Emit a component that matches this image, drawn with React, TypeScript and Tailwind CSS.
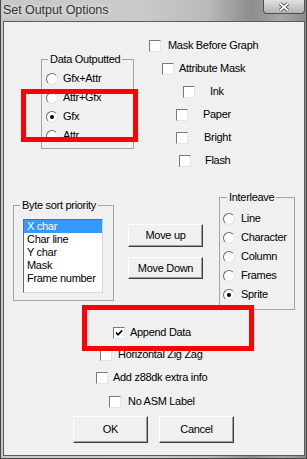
import React from "react";

const Radio = ({ checked }: { checked?: boolean }) => (
  <span className="flex h-[12px] w-[12px] shrink-0 items-center justify-center rounded-full border border-t-[#6e6e6e] border-l-[#6e6e6e] border-r-[#e2e2e2] border-b-[#e2e2e2] bg-white">
    {checked && <span className="h-[4px] w-[4px] rounded-full bg-black" />}
  </span>
);

const Check = ({ checked }: { checked?: boolean }) => (
  <span className="flex h-[12px] w-[12px] shrink-0 items-center justify-center border border-t-[#7a7a7a] border-l-[#7a7a7a] border-r-[#e4e4e4] border-b-[#e4e4e4] bg-white">
    {checked && (
      <svg width="10" height="10" viewBox="0 0 10 10">
        <path d="M2 4.5 L4 6.8 L8.2 2.4" fill="none" stroke="#000" strokeWidth="1.7" />
      </svg>
    )}
  </span>
);

const Btn = ({ label, h }: { label: string; h: string }) => (
  <button
    className={`flex w-[75px] items-center justify-center border border-t-white border-l-white border-r-[#3c3c3c] border-b-[#3c3c3c] bg-[#f0f0f0] shadow-[inset_-1px_-1px_0_#a0a0a0] ${h}`}
  >
    {label}
  </button>
);

const RadioRow = ({ label, checked, gap }: { label: string; checked?: boolean; gap: string }) => (
  <div className={`flex h-[19px] items-center ${gap}`}>
    <Radio checked={checked} />
    <span>{label}</span>
  </div>
);

const CheckRow = ({ label, checked, pad, gap, h = "h-[23px]" }: { label: string; checked?: boolean; pad: string; gap: string; h?: string }) => (
  <div className={`flex items-center ${h} ${pad} ${gap}`}>
    <Check checked={checked} />
    <span>{label}</span>
  </div>
);

export default function App() {
  return (
    <div className="relative h-[459px] w-[307px] overflow-hidden border-x border-b border-[#474747] bg-[linear-gradient(90deg,#c6c6c6_0%,#cbcbcb_45%,#b9b9b9_68%,#8d8d8d_82%,#a7a7a7_92%,#8a8a8a_100%)] font-['Liberation_Sans',Arial,sans-serif] text-[11px] leading-[13px] tracking-[-0.3px] text-black">
      {/* title bar */}
      <div className="flex h-[21px] items-start justify-between pl-[2px] pr-[1px]">
        <span className="mt-[3px] text-[12.5px] leading-[14px] tracking-[-0.05px] text-[#353535] [text-shadow:0_0_6px_#ffffff]">
          Set Output Options
        </span>
        <div className="flex h-[14px] w-[42px] items-center justify-center rounded-b-[4px] border border-t-0 border-[#4f4f4f] bg-[linear-gradient(#e2e2e2,#b3b3b3)]">
          <svg width="12" height="10" viewBox="0 0 12 10">
            <path d="M2 1.5 L10 8.5 M10 1.5 L2 8.5" stroke="#3a3a3a" strokeWidth="3.4" />
            <path d="M2 1.5 L10 8.5 M10 1.5 L2 8.5" stroke="#ffffff" strokeWidth="1.8" />
          </svg>
        </div>
      </div>

      {/* client area */}
      <div className="ml-[2px] h-[435px] w-[302px] border border-[#5b5b5b] bg-[#f0f0f0]">
        {/* top row */}
        <div className="flex h-[150px] items-start">
          <fieldset className="ml-[37px] mt-[31px] h-[96px] w-[93px] border border-[#a3a3a3]">
            <legend className="ml-[6px] px-[2px] leading-[13px]">Data Outputted</legend>
            <div className="pl-[4px] pt-[3px]">
              <RadioRow label="Gfx+Attr" gap="gap-[5px]" />
              <RadioRow label="Attr+Gfx" gap="gap-[5px]" />
              <RadioRow label="Gfx" checked gap="gap-[5px]" />
              <RadioRow label="Attr" gap="gap-[5px]" />
            </div>
          </fieldset>
          <div className="ml-[15px] flex flex-col pt-[12px]">
            <CheckRow label="Mask Before Graph" pad="pl-0" gap="gap-[7px]" />
            <CheckRow label="Attribute Mask" pad="pl-[13px]" gap="gap-[5px]" />
            <CheckRow label="Ink" pad="pl-[34px]" gap="gap-[15px]" />
            <CheckRow label="Paper" pad="pl-[27px]" gap="gap-[15px]" />
            <CheckRow label="Bright" pad="pl-[27px]" gap="gap-[16px]" />
            <CheckRow label="Flash" pad="pl-[30px]" gap="gap-[14px]" />
          </div>
        </div>

        {/* middle row */}
        <div className="flex h-[138px] items-start">
          <fieldset className="ml-[9px] mt-[27px] h-[102px] w-[101px] border border-[#a3a3a3]">
            <legend className="ml-[6px] px-[2px] leading-[13px]">Byte sort priority</legend>
            <div className="ml-[9px] mt-[7px] h-[74px] w-[80px] border border-t-[#6a6a6a] border-l-[#6a6a6a] border-r-[#d6d6d6] border-b-[#d6d6d6] bg-white">
              <div className="h-[13px] bg-[#3399ff] pl-[3px] text-white">X char</div>
              <div className="h-[13px] pl-[3px]">Char line</div>
              <div className="h-[13px] pl-[3px]">Y char</div>
              <div className="h-[13px] pl-[3px]">Mask</div>
              <div className="h-[13px] pl-[3px]">Frame number</div>
            </div>
          </fieldset>
          <div className="ml-[14px] mt-[52px] flex flex-col gap-[10px]">
            <Btn label="Move up" h="h-[23px]" />
            <Btn label="Move Down" h="h-[22px]" />
          </div>
          <fieldset className="ml-[16px] mt-[19px] h-[119px] w-[76px] border border-[#a3a3a3]">
            <legend className="ml-[7px] px-[2px] leading-[13px]">Interleave</legend>
            <div className="pl-[3px] pt-[5px]">
              <RadioRow label="Line" gap="gap-[6px]" />
              <RadioRow label="Character" gap="gap-[6px]" />
              <RadioRow label="Column" gap="gap-[6px]" />
              <RadioRow label="Frames" gap="gap-[6px]" />
              <RadioRow label="Sprite" checked gap="gap-[6px]" />
            </div>
          </fieldset>
        </div>

        {/* bottom checks */}
        <div className="mt-[11px] flex flex-col">
          <CheckRow label="Append Data" checked pad="pl-[109px]" gap="gap-[5px]" />
          <CheckRow label="Horizontal Zig Zag" pad="pl-[96px]" gap="gap-[6px]" h="h-[21px]" />
          <CheckRow label="Add z88dk extra info" pad="pl-[92px]" gap="gap-[5px]" h="h-[25px]" />
          <CheckRow label="No ASM Label" pad="pl-[105px]" gap="gap-[7px]" />
        </div>

        {/* buttons */}
        <div className="mt-[3px] flex gap-[11px] pl-[69px]">
          <Btn label="OK" h="h-[27px]" />
          <Btn label="Cancel" h="h-[27px]" />
        </div>
      </div>

      {/* red annotation boxes */}
      <div className="absolute left-[20px] top-[89px] h-[53px] w-[117px] border-[5px] border-[#ff0000]" />
      <div className="absolute left-[81px] top-[305px] h-[46px] w-[172px] border-[5px] border-[#ff0000]" />
    </div>
  );
}
